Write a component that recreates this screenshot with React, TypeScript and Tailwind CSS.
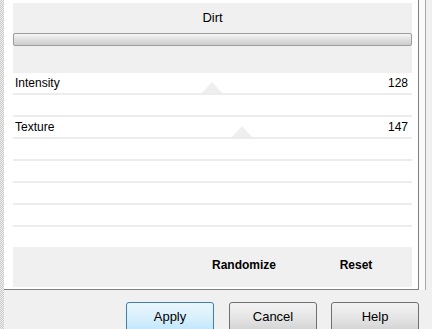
import React from "react";

type Row = { label: string; value: string; thumb: number | null };

const rows: Row[] = [
  { label: "Intensity", value: "128", thumb: 212 },
  { label: "", value: "", thumb: null },
  { label: "Texture", value: "147", thumb: 242 },
  { label: "", value: "", thumb: null },
  { label: "", value: "", thumb: null },
  { label: "", value: "", thumb: null },
  { label: "", value: "", thumb: null },
  { label: "", value: "", thumb: null },
];

function Thumb({ x }: { x: number }) {
  return (
    <svg
      className="absolute bottom-0"
      style={{ left: x - 13 - 10 }}
      width="20"
      height="11"
      viewBox="0 0 20 11"
    >
      <polygon points="10,0 20,11 0,11" fill="#eeeeee" />
    </svg>
  );
}

export default function App() {
  return (
    <div className="w-[432px] h-[329px] overflow-hidden bg-[#f0f0f0] flex text-black font-['Liberation_Sans',Arial,sans-serif]">
      <div className="w-[4px] h-full shrink-0 bg-[conic-gradient(#c9c9c9_25%,#efefef_0_50%,#c9c9c9_0_75%,#efefef_0)] bg-[length:2px_2px]" />
      <div className="flex-1 flex flex-col">
        <div className="h-[290px] flex shrink-0">
          <div className="w-[415px] h-full shrink-0 bg-white border-r border-b border-[#808080] pl-[9px] pr-[6px] pt-[3px] flex flex-col">
            <div className="h-[70px] bg-[#f0f0f0] flex flex-col">
              <div className="h-[30px] flex items-center justify-center text-[13px]">Dirt</div>
              <div className="h-[13px] rounded-[2px] border border-[#9c9c9c] bg-gradient-to-b from-[#f6f6f6] via-[#e0e0e0] to-[#cdcdcd]" />
            </div>
            <div className="flex flex-col">
              {rows.map((r, i) => (
                <div
                  key={i}
                  className={
                    i < rows.length - 1
                      ? "relative h-[22px] border-b-2 border-[#ececec] flex items-center justify-between pl-[2px] pr-[4px] text-[12px]"
                      : "relative h-[20px] flex items-center justify-between pl-[2px] pr-[4px] text-[12px]"
                  }
                >
                  {r.thumb !== null && <Thumb x={r.thumb} />}
                  <span className="relative">{r.label}</span>
                  <span className="relative">{r.value}</span>
                </div>
              ))}
            </div>
            <div className="h-[40px] bg-[#f0f0f0] flex justify-end items-center pb-[4px] text-[12px] font-bold">
              <span className="w-[112px] text-center">Randomize</span>
              <span className="w-[112px] text-center">Reset</span>
            </div>
          </div>
          <div className="flex-1 flex">
            <div className="w-[6px] bg-[#fafafa]" />
            <div className="w-[1px] bg-[#a8a8a8]" />
            <div className="flex-1 bg-[#f0f0f0]" />
          </div>
        </div>
        <div className="flex-1 flex items-start pt-[12px] pl-[122px] text-[13px]">
          <div className="w-[88px] h-[30px] shrink-0 rounded-[3px] border border-[#3c7fb1] bg-gradient-to-b from-[#eaf6fd] via-[#d9f0fc] to-[#bee6fd] flex items-center justify-center">
            Apply
          </div>
          <div className="ml-[15px] w-[88px] h-[30px] shrink-0 rounded-[3px] border border-[#707070] bg-gradient-to-b from-[#f2f2f2] via-[#e6e6e6] to-[#d2d2d2] flex items-center justify-center">
            Cancel
          </div>
          <div className="ml-[14px] w-[88px] h-[30px] shrink-0 rounded-[3px] border border-[#707070] bg-gradient-to-b from-[#f2f2f2] via-[#e6e6e6] to-[#d2d2d2] flex items-center justify-center">
            Help
          </div>
        </div>
      </div>
    </div>
  );
}
